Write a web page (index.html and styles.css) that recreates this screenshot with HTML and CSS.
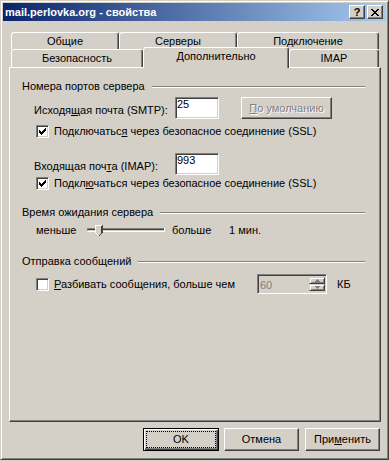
FILE: index.html
```html
<!DOCTYPE html>
<html lang="ru">
<head>
    <meta charset="UTF-8">
    <title>mail.perlovka.org - свойства</title>
    <link rel="stylesheet" href="styles.css">
</head>
<body>
    <div class="window">
        <div class="titlebar">
            <span class="title">mail.perlovka.org - свойства</span>
            <div class="caption-buttons">
                <span class="cap-btn help">?</span>
                <span class="cap-btn close">
                    <svg width="8" height="7" viewBox="0 0 8 7" shape-rendering="crispEdges">
                        <path d="M0 0h2v1h-2z M6 0h2v1h-2z M1 1h2v1h-2z M5 1h2v1h-2z M2 2h4v1h-4z M3 3h2v1h-2z M2 4h4v1h-4z M1 5h2v1h-2z M5 5h2v1h-2z M0 6h2v1h-2z M6 6h2v1h-2z" fill="#000"/>
                    </svg>
                </span>
            </div>
        </div>

        <div class="client">
            <div class="tabs">
                <div class="tab-row">
                    <div class="tab tab-general">Общие</div>
                    <div class="tab tab-servers">Серверы</div>
                    <div class="tab tab-connection">Подключение</div>
                </div>
                <div class="tab-row front">
                    <div class="tab tab-security">Безопасность</div>
                    <div class="tab tab-advanced active">Дополнительно</div>
                    <div class="tab tab-imap">IMAP</div>
                </div>
            </div>

            <div class="panel">
                <div class="group-title"><span>Номера портов сервера</span><i class="etch"></i></div>
                <div class="port-row">
                    <span class="field-label">Исходя<u>щ</u>ая почта (SMTP):</span>
                    <span class="edit">25</span>
                    <span class="btn btn-restore disabled"><u>П</u>о умолчанию</span>
                </div>
                <div class="check-row first">
                    <span class="checkbox">
                        <svg width="7" height="7" viewBox="0 0 7 7" shape-rendering="crispEdges"><path d="M6 0h1v1h-1z M5 1h2v1h-2z M0 2h1v1h-1z M4 2h3v1h-3z M0 3h2v1h-2z M3 3h3v1h-3z M0 4h5v1h-5z M1 5h3v1h-3z M2 6h1v1h-1z" fill="#000"/></svg>
                    </span>
                    <span class="check-label">Подключатьс<u>я</u> через безопасное соединение (SSL)</span>
                </div>
                <div class="port-row imap">
                    <span class="field-label">Входящая поч<u>т</u>а (IMAP):</span>
                    <span class="edit">993</span>
                </div>
                <div class="check-row second">
                    <span class="checkbox">
                        <svg width="7" height="7" viewBox="0 0 7 7" shape-rendering="crispEdges"><path d="M6 0h1v1h-1z M5 1h2v1h-2z M0 2h1v1h-1z M4 2h3v1h-3z M0 3h2v1h-2z M3 3h3v1h-3z M0 4h5v1h-5z M1 5h3v1h-3z M2 6h1v1h-1z" fill="#000"/></svg>
                    </span>
                    <span class="check-label">Подкл<u>ю</u>чаться через безопасное соединение (SSL)</span>
                </div>

                <div class="group-title timeout"><span>Время ожидания сервера</span><i class="etch"></i></div>
                <div class="slider-row">
                    <span class="slider-min">меньше</span>
                    <svg class="slider" width="78" height="14" viewBox="0 0 78 14" shape-rendering="crispEdges">
                        <rect x="0" y="5" width="78" height="1" fill="#808080"/>
                        <rect x="1" y="6" width="76" height="1" fill="#404040"/>
                        <rect x="0" y="5" width="1" height="4" fill="#808080"/>
                        <rect x="0" y="8" width="78" height="1" fill="#fff"/>
                        <rect x="77" y="5" width="1" height="4" fill="#fff"/>
                        <path d="M8 2h8v8l-4 3l-4 -3z" fill="#d4d0c8"/>
                        <path d="M8 2h7v1h-6v7h-1z" fill="#fff"/>
                        <path d="M15 2h1v8h-1z M14 3h1v7h-1z" fill="#404040"/>
                        <path d="M9 10h1v1h-1z M10 11h1v1h-1z" fill="#fff"/>
                        <path d="M14 10h1v1h-1z M13 11h1v1h-1z M12 12h1v1h-1z" fill="#404040"/>
                    </svg>
                    <span class="slider-max">больше</span>
                    <span>1 мин.</span>
                </div>

                <div class="group-title sending"><span>Отправка сообщений</span><i class="etch"></i></div>
                <div class="check-row split">
                    <span class="checkbox"></span>
                    <span class="check-label split-label"><u>Р</u>азбивать сообщения, больше чем</span>
                    <span class="spin">
                        <span class="spin-value">60</span>
                        <span class="spin-buttons">
                            <span class="spin-btn">
                                <svg width="5" height="3" viewBox="0 0 5 3" shape-rendering="crispEdges"><path d="M2 0h1v1h-1z M1 1h3v1h-3z M0 2h5v1h-5z" fill="#808080"/></svg>
                            </span>
                            <span class="spin-btn">
                                <svg width="5" height="3" viewBox="0 0 5 3" shape-rendering="crispEdges"><path d="M0 0h5v1h-5z M1 1h3v1h-3z M2 2h1v1h-1z" fill="#808080"/></svg>
                            </span>
                        </span>
                    </span>
                    <span class="unit">КБ</span>
                </div>
            </div>

            <div class="dialog-buttons">
                <span class="btn btn-ok default"><span class="focus">OK</span></span>
                <span class="btn btn-cancel">Отмена</span>
                <span class="btn btn-apply">При<u>м</u>енить</span>
            </div>
        </div>
    </div>
</body>
</html>
```

FILE: styles.css
```css
* {
    box-sizing: border-box;
}
body {
    margin: 0;
    background-color: #d4d0c8;
    font-family: "Liberation Sans", Arial, sans-serif;
    font-size: 11px;
    line-height: 13px;
    color: #000;
}
u {
    text-decoration: underline;
    text-underline-offset: 1px;
}

/* window frame */
.window {
    width: 389px;
    height: 460px;
    padding: 2px;
    background-color: #d4d0c8;
    border: 1px solid;
    border-color: #d4d0c8 #404040 #404040 #d4d0c8;
    box-shadow: inset 1px 1px #fff, inset -1px -1px #808080;
}
.titlebar {
    height: 18px;
    display: flex;
    align-items: center;
    justify-content: space-between;
    padding: 0 3px 0 2px;
    background: linear-gradient(to right, #0a246a, #a6caf0);
}
.title {
    color: #fff;
    font-weight: bold;
    font-size: 11px;
}
.caption-buttons {
    display: flex;
    gap: 2px;
}
.cap-btn {
    width: 16px;
    height: 14px;
    display: flex;
    align-items: center;
    justify-content: center;
    background-color: #d4d0c8;
    border: 1px solid;
    border-color: #fff #404040 #404040 #fff;
    box-shadow: inset -1px -1px #808080;
}
.cap-btn.help {
    font-weight: bold;
    font-size: 11px;
    line-height: 12px;
}

.client {
    padding: 11px 5px 0 6px;
}

/* tabs */
.tab-row {
    display: flex;
    align-items: flex-start;
    padding-left: 2px;
}
.tab {
    height: 17px;
    padding-top: 2px;
    text-align: center;
    white-space: nowrap;
    background-color: #d4d0c8;
    border-top: 1px solid #fff;
    border-left: 1px solid #fff;
    border-right: 1px solid #404040;
    border-radius: 3px 3px 0 0;
    box-shadow: inset -1px 0 #808080;
}
.front .tab {
    height: 18px;
}
.tab-general { width: 108px; }
.tab-servers { width: 118px; }
.tab-connection { width: 142px; }
.tab-security { width: 132px; }
.tab-advanced { width: 146px; }
.tab-imap { width: 90px; }
.front .tab.active {
    position: relative;
    z-index: 1;
    height: 21px;
    margin-top: -2px;
    margin-bottom: -1px;
}

.panel {
    height: 355px;
    padding: 12px 15px 0 12px;
    border: 1px solid;
    border-color: #fff #404040 #404040 #fff;
    box-shadow: inset -1px -1px #808080;
}

/* group boxes */
.group-title {
    display: flex;
    align-items: center;
    gap: 7px;
    height: 13px;
}
.etch {
    flex: 1;
    height: 2px;
    border-top: 1px solid #808080;
    border-bottom: 1px solid #fff;
}
.group-title.timeout {
    margin-top: 16px;
}
.group-title.sending {
    margin-top: 18px;
}

.port-row {
    display: flex;
    height: 22px;
    margin-top: 4px;
    padding-left: 12px;
}
.port-row.imap {
    margin-top: 15px;
}
.field-label {
    width: 141px;
    padding-top: 7px;
}
.edit {
    width: 44px;
    height: 22px;
    padding: 1px 0 0 1px;
    line-height: 11px;
    background-color: #fff;
    border: 1px solid;
    border-color: #808080 #fff #fff #808080;
    box-shadow: inset 1px 1px #404040, inset -1px -1px #d4d0c8;
}

.btn {
    display: flex;
    align-items: center;
    justify-content: center;
    height: 23px;
    background-color: #d4d0c8;
    border: 1px solid;
    border-color: #fff #404040 #404040 #fff;
    box-shadow: inset -1px -1px #808080;
    white-space: nowrap;
}
.btn.disabled {
    color: #808080;
    text-shadow: 1px 1px #fff;
}
.btn-restore {
    width: 91px;
    height: 22px;
    margin-left: 22px;
}

.check-row {
    display: flex;
    align-items: center;
    height: 13px;
    padding-left: 14px;
}
.check-row.first {
    margin-top: 6px;
}
.check-row.second {
    margin-top: 2px;
}
.checkbox {
    width: 13px;
    height: 13px;
    flex-shrink: 0;
    display: flex;
    align-items: center;
    justify-content: center;
    background-color: #fff;
    border: 1px solid;
    border-color: #808080 #fff #fff #808080;
    box-shadow: inset 1px 1px #404040, inset -1px -1px #d4d0c8;
}
.check-label {
    margin-left: 5px;
    white-space: nowrap;
}

.slider-row {
    display: flex;
    align-items: center;
    height: 14px;
    margin-top: 4px;
    padding-left: 14px;
}
.slider-min {
    width: 51px;
}
.slider-max {
    width: 57px;
    margin-left: 7px;
}

.check-row.split {
    height: 20px;
    margin-top: 6px;
}
.split-label {
    width: 203px;
}
.spin {
    display: flex;
    width: 70px;
    height: 20px;
    padding: 2px 1px 2px 2px;
    border: 1px solid;
    border-color: #808080 #fff #fff #808080;
    box-shadow: inset 1px 1px #404040, inset -1px -1px #d4d0c8;
}
.spin-value {
    flex: 1;
    color: #808080;
    line-height: 16px;
}
.spin-buttons {
    display: flex;
    flex-direction: column;
    width: 16px;
}
.spin-btn {
    height: 8px;
    display: flex;
    align-items: center;
    justify-content: center;
    border: 1px solid;
    border-color: #d4d0c8 #404040 #404040 #d4d0c8;
    box-shadow: inset 1px 1px #fff, inset -1px -1px #808080;
}
.unit {
    margin-left: 10px;
}

/* bottom buttons */
.dialog-buttons {
    display: flex;
    justify-content: flex-end;
    margin-top: 6px;
    padding-right: 1px;
}
.btn-ok {
    width: 76px;
    margin-right: 5px;
}
.btn-cancel {
    width: 75px;
    margin-right: 6px;
}
.btn-apply {
    width: 75px;
}
.btn.default {
    padding: 2px;
    border-color: #000;
    box-shadow: inset 1px 1px #fff, inset -1px -1px #404040, inset -2px -2px #808080;
}
.focus {
    flex: 1;
    align-self: stretch;
    display: flex;
    align-items: center;
    justify-content: center;
    border: 1px dotted #000;
}
```
